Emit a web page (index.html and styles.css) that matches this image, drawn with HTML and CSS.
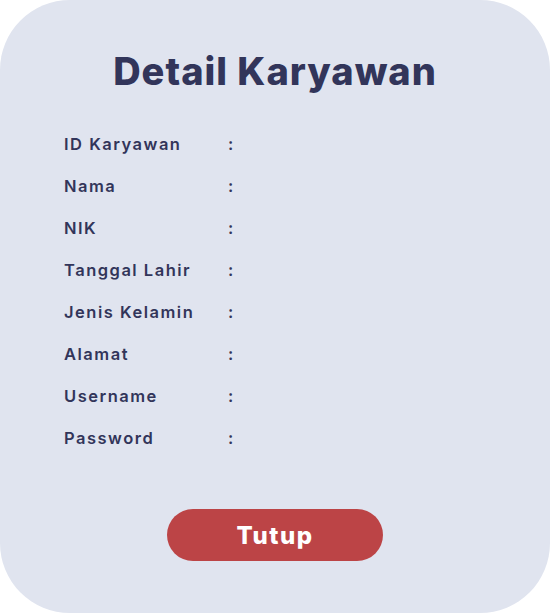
FILE: index.html
```html
<!DOCTYPE html>
<html lang="id">
<head>
<meta charset="utf-8">
<title>Detail Karyawan</title>
<link rel="stylesheet" href="styles.css">
</head>
<body>
<div class="card">
  <h1 class="title">Detail Karyawan</h1>
  <dl class="details">
    <div class="row"><dt>ID Karyawan</dt><dd>:</dd></div>
    <div class="row"><dt>Nama</dt><dd>:</dd></div>
    <div class="row"><dt>NIK</dt><dd>:</dd></div>
    <div class="row"><dt>Tanggal Lahir</dt><dd>:</dd></div>
    <div class="row"><dt>Jenis Kelamin</dt><dd>:</dd></div>
    <div class="row"><dt>Alamat</dt><dd>:</dd></div>
    <div class="row"><dt>Username</dt><dd>:</dd></div>
    <div class="row"><dt>Password</dt><dd>:</dd></div>
  </dl>
  <div class="actions">
    <button class="btn-close" type="button">Tutup</button>
  </div>
</div>
</body>
</html>
```
FILE: styles.css
```css
* { box-sizing: border-box; }
html, body {
  margin: 0;
  padding: 0;
  background: #ffffff;
}
body {
  font-family: Inter, "Noto Sans", sans-serif;
  color: #32355a;
}
.card {
  width: 550px;
  height: 613px;
  background: #e0e4ef;
  border-radius: 70px;
  padding: 49px 0 0 0;
  display: flex;
  flex-direction: column;
}
.title {
  margin: 0;
  font-size: 38px;
  line-height: 44px;
  font-weight: 800;
  text-align: center;
  letter-spacing: 1px;
}
.details {
  margin: 30px 0 0 64px;
  padding: 0;
  display: flex;
  flex-direction: column;
}
.row {
  display: grid;
  grid-template-columns: 164px auto;
  height: 42px;
  line-height: 42px;
  font-size: 16.5px;
  font-weight: 600;
  letter-spacing: 1.5px;
}
.row dt, .row dd { margin: 0; }
.actions {
  display: flex;
  justify-content: center;
  margin-top: 50px;
}
.btn-close {
  width: 216px;
  height: 52px;
  border: none;
  border-radius: 26px;
  background: #bc4446;
  color: #ffffff;
  font-family: Inter, "Noto Sans", sans-serif;
  font-size: 24px;
  font-weight: 800;
  letter-spacing: 1.5px;
  padding-top: 2px;
}
```
